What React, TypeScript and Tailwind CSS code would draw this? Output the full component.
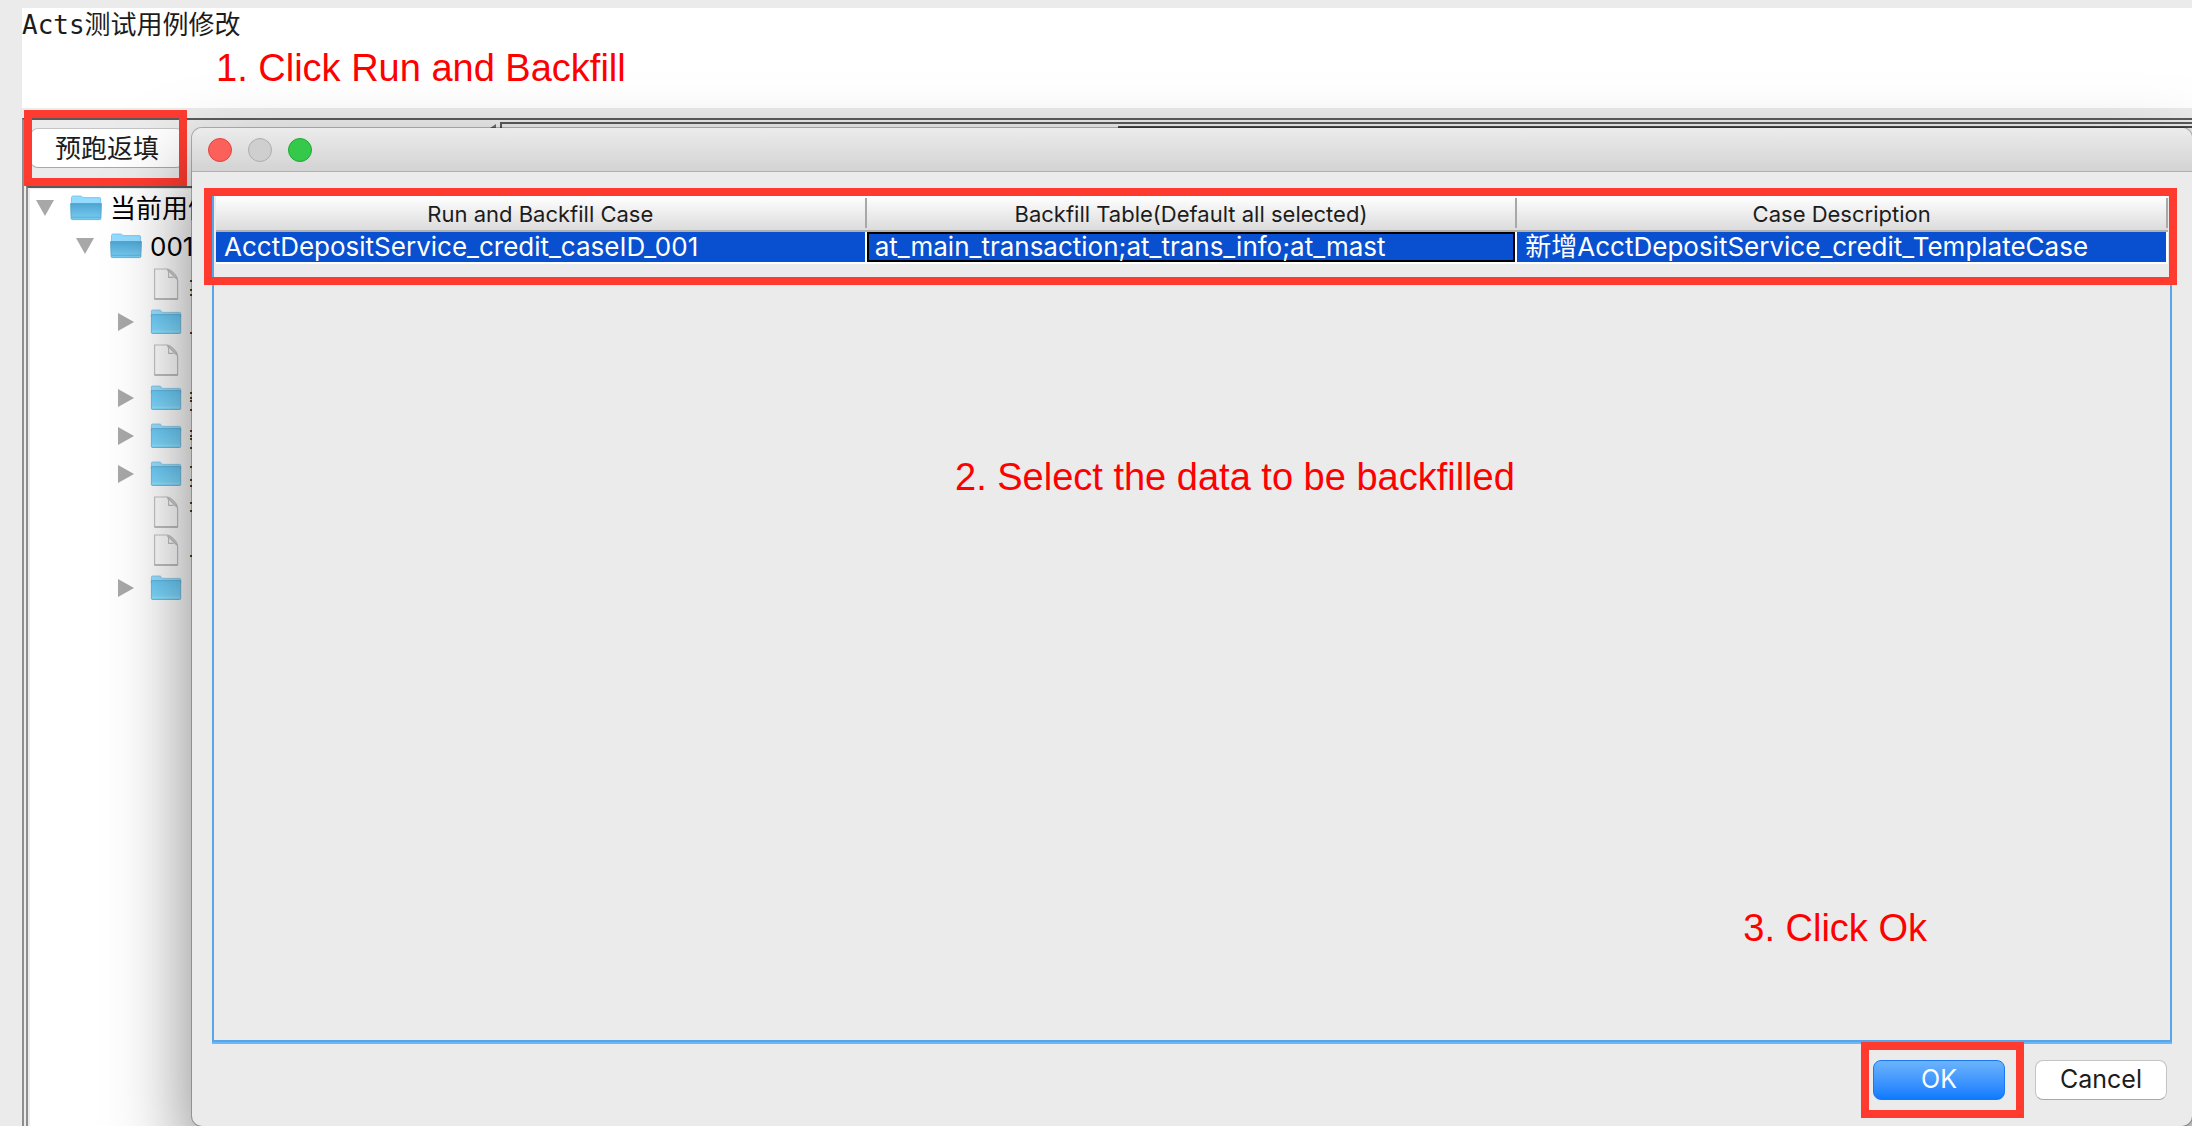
import React from "react";

const sans = "font-['Inter','Noto_Sans_CJK_SC',sans-serif]";

function OpenFolder() {
  return (
    <svg width="32" height="26" viewBox="0 0 32 26" className="shrink-0" aria-hidden="true">
      <defs>
        <linearGradient id="folderFront" x1="0" y1="0" x2="0" y2="1">
          <stop offset="0" stopColor="#4fa6d2" />
          <stop offset="1" stopColor="#78cdf3" />
        </linearGradient>
      </defs>
      <path d="M1.5 9V2.5Q1.5 1 3 1H10.5Q11.5 1 12.2 1.8L13 2.6H29.5Q30.6 2.6 30.6 4V9Z" fill="#93dcff" stroke="#6cc0e8" strokeWidth="0.8" />
      <path d="M0.5 8.6H31.5L30.9 23.4Q30.8 24.6 29.6 24.6H2.4Q1.2 24.6 1.1 23.4Z" fill="url(#folderFront)" stroke="#4a9dc6" strokeWidth="0.7" />
      <path d="M1.5 22.3H30.5" stroke="#58a9d0" strokeWidth="0.8" />
    </svg>
  );
}

function ClosedFolder() {
  return (
    <svg width="32" height="26" viewBox="0 0 32 26" className="shrink-0" aria-hidden="true">
      <defs>
        <linearGradient id="folderBody" x1="0" y1="0" x2="0" y2="1">
          <stop offset="0" stopColor="#6acbf8" />
          <stop offset="1" stopColor="#84dcff" />
        </linearGradient>
      </defs>
      <path d="M1.4 8V2Q1.4 1 2.4 1H9.5Q10.5 1 11 1.7L12.3 3.4H29.6Q30.7 3.4 30.7 4.5V8Z" fill="#9adfff" stroke="#70c0e6" strokeWidth="0.7" />
      <path d="M1.4 5.6H30.7V23.6Q30.7 24.5 29.7 24.5H2.4Q1.4 24.5 1.4 23.6Z" fill="url(#folderBody)" stroke="#54a8d0" strokeWidth="0.7" />
      <path d="M1.8 22.2H30.3" stroke="#a4e6ff" strokeWidth="0.8" />
    </svg>
  );
}

function FileIcon() {
  return (
    <svg width="32" height="32" viewBox="0 0 32 32" className="shrink-0" aria-hidden="true">
      <path d="M4.6 1H17.5Q20 1.4 22.5 4L25.5 7.2Q27.6 9.6 27.6 12.5V31H4.6Z" fill="#fff" fillOpacity="0.35" stroke="#c4c4c4" strokeWidth="1.2" />
      <path d="M17.5 1.4Q18.6 3 18.6 5V9.4H23.6" fill="#fff" fillOpacity="0.4" stroke="#c0c0c0" strokeWidth="1.1" />
      <path d="M17.5 1.4L27 11" stroke="#c0c0c0" strokeWidth="1.6" />
      <path d="M4.6 31H27.6" stroke="#a8a8a8" strokeWidth="1.2" />
    </svg>
  );
}

function Arrow({ open }: { open?: boolean }) {
  return (
    <svg width="18" height="18" viewBox="0 0 18 18" className="shrink-0" aria-hidden="true">
      <path d={open ? "M0 1H18L9 17Z" : "M1 0L17 9L1 18Z"} fill="#a8a8a8" />
    </svg>
  );
}

type Item = { kind: "file" | "folder"; edge: number[] };

/* `edge` lists where the label's leading strokes peek out beside the dialog. */
const items: Item[] = [
  { kind: "file", edge: [15, 24, 29] },
  { kind: "folder", edge: [29] },
  { kind: "file", edge: [] },
  { kind: "folder", edge: [13, 18, 21, 30] },
  { kind: "folder", edge: [13, 18, 21, 30] },
  { kind: "folder", edge: [11, 24, 30] },
  { kind: "file", edge: [9, 17] },
  { kind: "file", edge: [24] },
  { kind: "folder", edge: [] },
];

function Tree() {
  return (
    <ul className="text-[26px] leading-[38px] text-black whitespace-nowrap">
      <li className="flex h-[38px] items-center pl-1.5">
        <Arrow open />
        <span className="ml-4 flex"><OpenFolder /></span>
        <span className="ml-2 pt-0.5">当前用例</span>
      </li>
      <li className="flex h-[38px] items-center pl-[46px]">
        <Arrow open />
        <span className="ml-4 flex"><OpenFolder /></span>
        <span className="ml-2 pt-0.5">001</span>
      </li>
      {items.map((item, i) => (
        <li key={i} className="flex h-[38px] items-center pl-[87px]">
          <span className="flex w-[18px]">{item.kind === "folder" && <Arrow />}</span>
          <span className="ml-[15px] flex">{item.kind === "folder" ? <ClosedFolder /> : <FileIcon />}</span>
          <svg width="2" height="38" viewBox="0 0 2 38" className="ml-2" aria-hidden="true">
            {item.edge.map((y) => <rect key={y} y={y} width="2" height="2" fill="#5a4520" />)}
          </svg>
        </li>
      ))}
    </ul>
  );
}

const columns = ["Run and Backfill Case", "Backfill Table(Default all selected)", "Case Description"];

function CaseTable() {
  return (
    <table className="w-full table-fixed border-separate border-spacing-0">
      <thead>
        <tr className="h-9">
          {columns.map((c) => (
            <th key={c} className="border-b-2 border-[#b0b0b0] bg-linear-to-b from-white to-[#dcdcdc] p-0 text-[22px] leading-7 font-normal text-[#1c1c1c]">
              <div className="my-px border-r-2 border-[#a8a8a8] pt-0.5">{c}</div>
            </th>
          ))}
        </tr>
      </thead>
      <tbody>
        <tr className="text-[26px] leading-[30px] text-white">
          <td className="h-8 border-r-2 border-b-2 border-white bg-[#0850d0] p-0 pl-2">AcctDepositService_credit_caseID_001</td>
          <td className="h-8 border-r-2 border-b-2 border-white bg-[#0850d0] p-0">
            <div className="h-[30px] border-2 border-black pl-1.5 leading-[26px]">at_main_transaction;at_trans_info;at_mast</div>
          </td>
          <td className="h-8 border-r-2 border-b-2 border-white bg-[#0850d0] p-0 pl-2">新增AcctDepositService_credit_TemplateCase</td>
        </tr>
      </tbody>
    </table>
  );
}

function Note({ className, children }: { className: string; children: React.ReactNode }) {
  return (
    <p className={"absolute font-['Liberation_Sans',Arial,sans-serif] text-[38px] leading-[44px] whitespace-nowrap text-[#ff0000] " + className}>
      {children}
    </p>
  );
}

function Dialog() {
  return (
    <section
      role="dialog"
      aria-label="Run and Backfill"
      className="absolute top-32 right-0 bottom-0 left-48 flex flex-col rounded-[10px] bg-[#ebebeb] shadow-[0_0_0_1px_rgba(0,0,0,0.25),0_40px_80px_rgba(0,0,0,0.5)]"
    >
      <header className="flex h-11 items-center gap-4 rounded-t-[10px] border-b border-[#b0b0b0] bg-linear-to-b from-[#ececec] to-[#d3d3d3] pl-4">
        <button aria-label="Close" className="size-6 rounded-full border border-[#e2443f] bg-[#fc605b]" />
        <button aria-label="Minimize" className="size-6 rounded-full border border-[#adadad] bg-[#cfcfcf]" />
        <button aria-label="Zoom" className="size-6 rounded-full border border-[#22a833] bg-[#34c94a]" />
      </header>
      <div className="flex flex-1 flex-col px-5 pt-[18px] pb-[26px]">
        <div className="relative flex-1 border-2 border-[#55a5e8] px-0.5 pt-1 shadow-[0_2px_0_#6bb8f8]">
          <CaseTable />
          <div className="pointer-events-none absolute -top-1 -right-[7px] -left-2.5 h-[97px] border-8 border-[#ff3b30]" />
          <Note className="top-[263px] left-[741px]">2. Select the data to be backfilled</Note>
          <Note className="right-[243px] bottom-[90px]">3. Click Ok</Note>
        </div>
        <footer className="mt-[18px] flex justify-end gap-[30px] pr-[5px] text-[25px]">
          <div className="relative">
            <button className="h-10 w-[132px] rounded-lg border border-[#1a78f5] bg-linear-to-b from-[#6bb3fb] to-[#0a7aff] text-white">OK</button>
            <div className="pointer-events-none absolute -top-[18px] -right-[19px] -bottom-[18px] -left-3 border-8 border-[#ff3b30]" />
          </div>
          <button className="h-10 w-[132px] rounded-lg border border-[#c4c4c4] border-b-[#a8a8a8] bg-white text-[#1c1c1c]">Cancel</button>
        </footer>
      </div>
    </section>
  );
}

export default function App() {
  return (
    <div className={"relative flex h-screen min-h-[640px] flex-col overflow-hidden bg-[#ebebeb] pt-2 pl-[22px] " + sans}>
      <header className="relative h-[100px] bg-white">
        <h1 className="font-['DejaVu_Sans_Mono','Noto_Sans_CJK_SC',monospace] text-[26px] leading-[34px] text-[#1c1c1c]">Acts测试用例修改</h1>
        <Note className="top-[38px] left-[194px]">1. Click Run and Backfill</Note>
      </header>
      <main className="mt-2.5 flex flex-1 border-t-2 border-l-2 border-t-[#5a5a5a] border-l-[#8e8e8e]">
        <div className="flex w-[466px] flex-col pl-0.5">
          <div className="flex h-[66px] items-start pt-2 pl-1">
            <div className="relative">
              <button className="h-10 w-[154px] rounded-lg border border-[#c4c4c4] border-b-[#a8a8a8] bg-white pt-0.5 text-[26px] leading-9 text-[#1c1c1c]">预跑返填</button>
              <div className="pointer-events-none absolute -top-[18px] -bottom-[18px] -left-1.5 w-[163px] border-8 border-[#ff3b30]" />
            </div>
          </div>
          <div className="flex-1 border-t-2 border-l-2 border-t-[#5a5a5a] border-l-[#8e8e8e]">
            <div className="h-full border-t border-l-2 border-[#ebebeb] bg-white">
              <Tree />
            </div>
          </div>
        </div>
        <div className="w-2.5 pt-1">
          <svg width="8" height="8" viewBox="0 0 8 8" aria-hidden="true"><path d="M0 4L6 0V8Z" fill="#6e6e6e" /></svg>
        </div>
        <div className="mt-0.5 flex flex-1 border-t-2 border-l-2 border-[#5a5a5a] pt-0.5">
          <div className="ml-[616px] flex-1 border-t-2 border-[#4a4a4a]" />
        </div>
      </main>
      <Dialog />
    </div>
  );
}
